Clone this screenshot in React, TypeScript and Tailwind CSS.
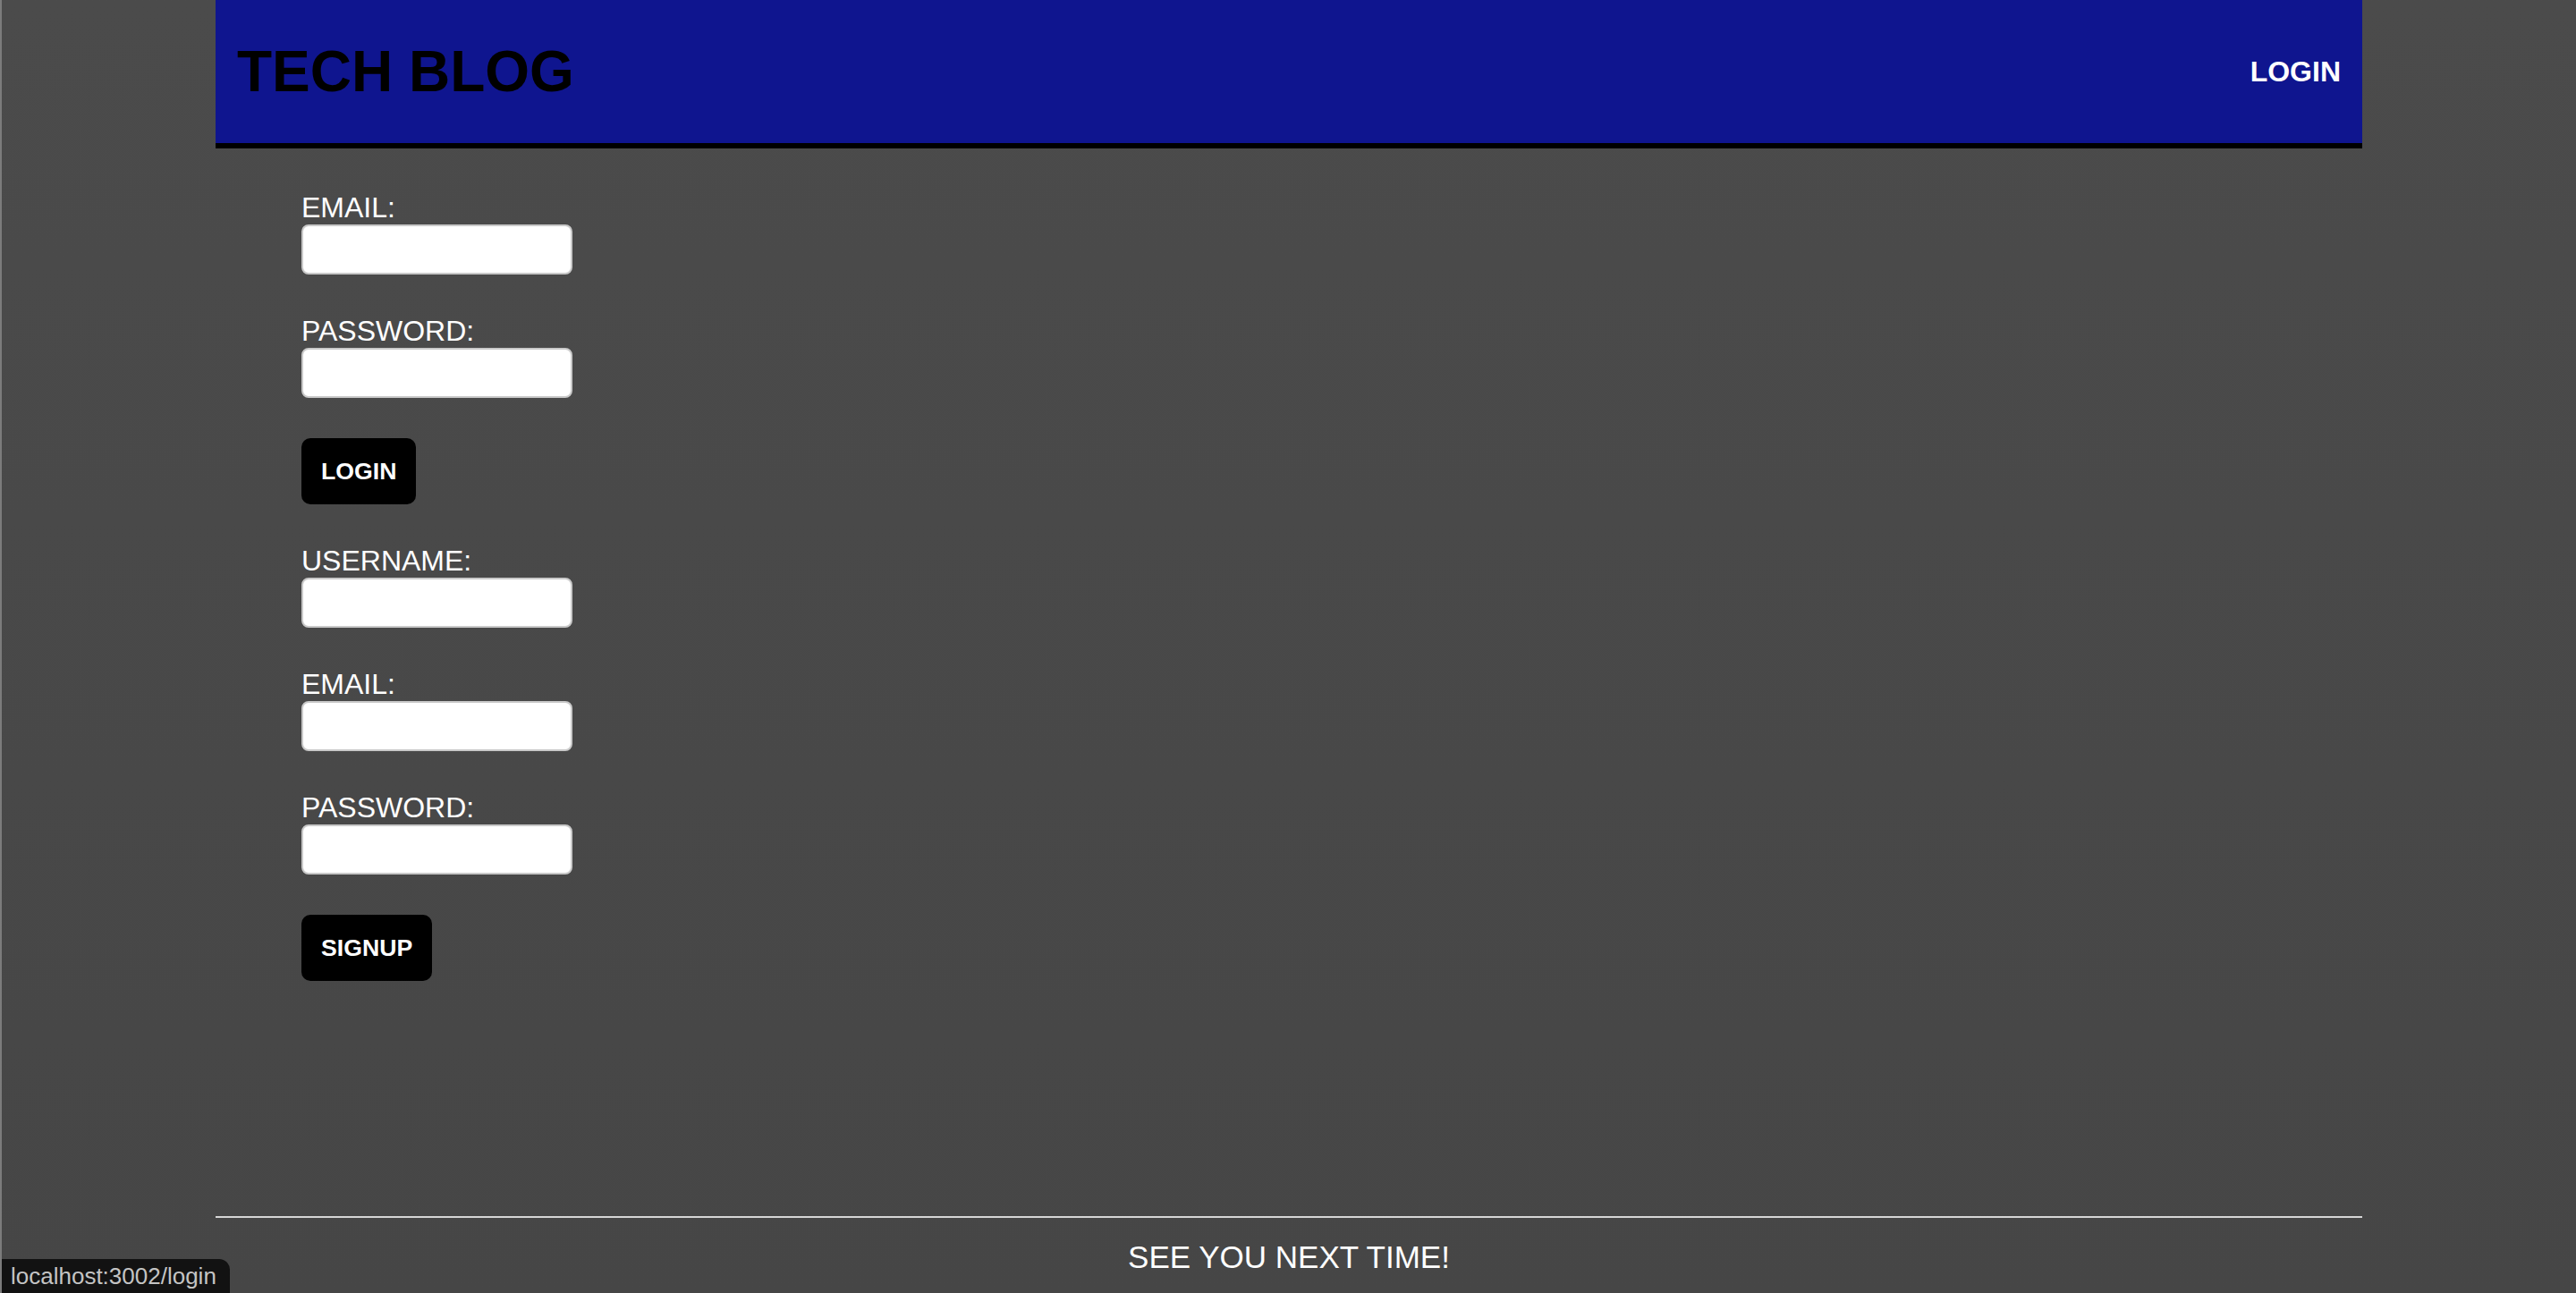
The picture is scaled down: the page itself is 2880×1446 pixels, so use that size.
const Field = ({ label, type }: { label: string; type: string }) => {
  return (
    <div className="flex flex-col">
      <label className="block text-[32px] leading-[37px] text-white">{label}</label>
      <input
        type={type}
        className="h-[56px] w-[303px] rounded-[8px] border-2 border-[#c9c9c9] bg-white px-3 text-[26px] text-black outline-none"
      />
    </div>
  );
};

const SubmitButton = ({ text }: { text: string }) => {
  return (
    <button className="h-[74px] self-start rounded-[10px] bg-black px-[22px] text-[26.67px] font-bold text-white">
      {text}
    </button>
  );
};

const App = () => {
  return (
    <div
      className="relative flex h-screen flex-col overflow-hidden border-l-2 border-[#7c7c7c] bg-[#4a4a4a] bg-gradient-to-b from-[#4b4b4b] to-[#464646]"
      style={{ fontFamily: '"Liberation Sans", Arial, sans-serif' }}
    >
      <div className="mx-auto flex w-[2400px] flex-1 flex-col">
        {/* header */}
        <header className="flex h-[166px] items-center justify-between border-b-[6px] border-black bg-[#0f158f] px-[24px]">
          <h1 className="text-[64px] font-bold text-black">TECH BLOG</h1>
          <a className="text-[32px] font-bold text-white" href="#">
            LOGIN
          </a>
        </header>

        {/* forms */}
        <main className="flex flex-1 flex-col gap-[45px] pl-[96px] pt-[48px]">
          <Field label="EMAIL:" type="email" />
          <Field label="PASSWORD:" type="password" />
          <SubmitButton text="LOGIN" />
          <Field label="USERNAME:" type="text" />
          <Field label="EMAIL:" type="email" />
          <Field label="PASSWORD:" type="password" />
          <SubmitButton text="SIGNUP" />
        </main>

        <footer className="border-t-2 border-[#d6d6d6] pb-[20px] pt-[24px] text-center text-[35px] leading-[40px] text-white">
          SEE YOU NEXT TIME!
        </footer>
      </div>

      {/* browser status bubble */}
      <div className="absolute bottom-0 left-0 flex h-[38px] w-[255px] items-center rounded-tr-[12px] bg-[#121212] pl-[10px] text-[26px] text-[#c4c4c4]">
        localhost:3002/login
      </div>
    </div>
  );
};

export default App;
